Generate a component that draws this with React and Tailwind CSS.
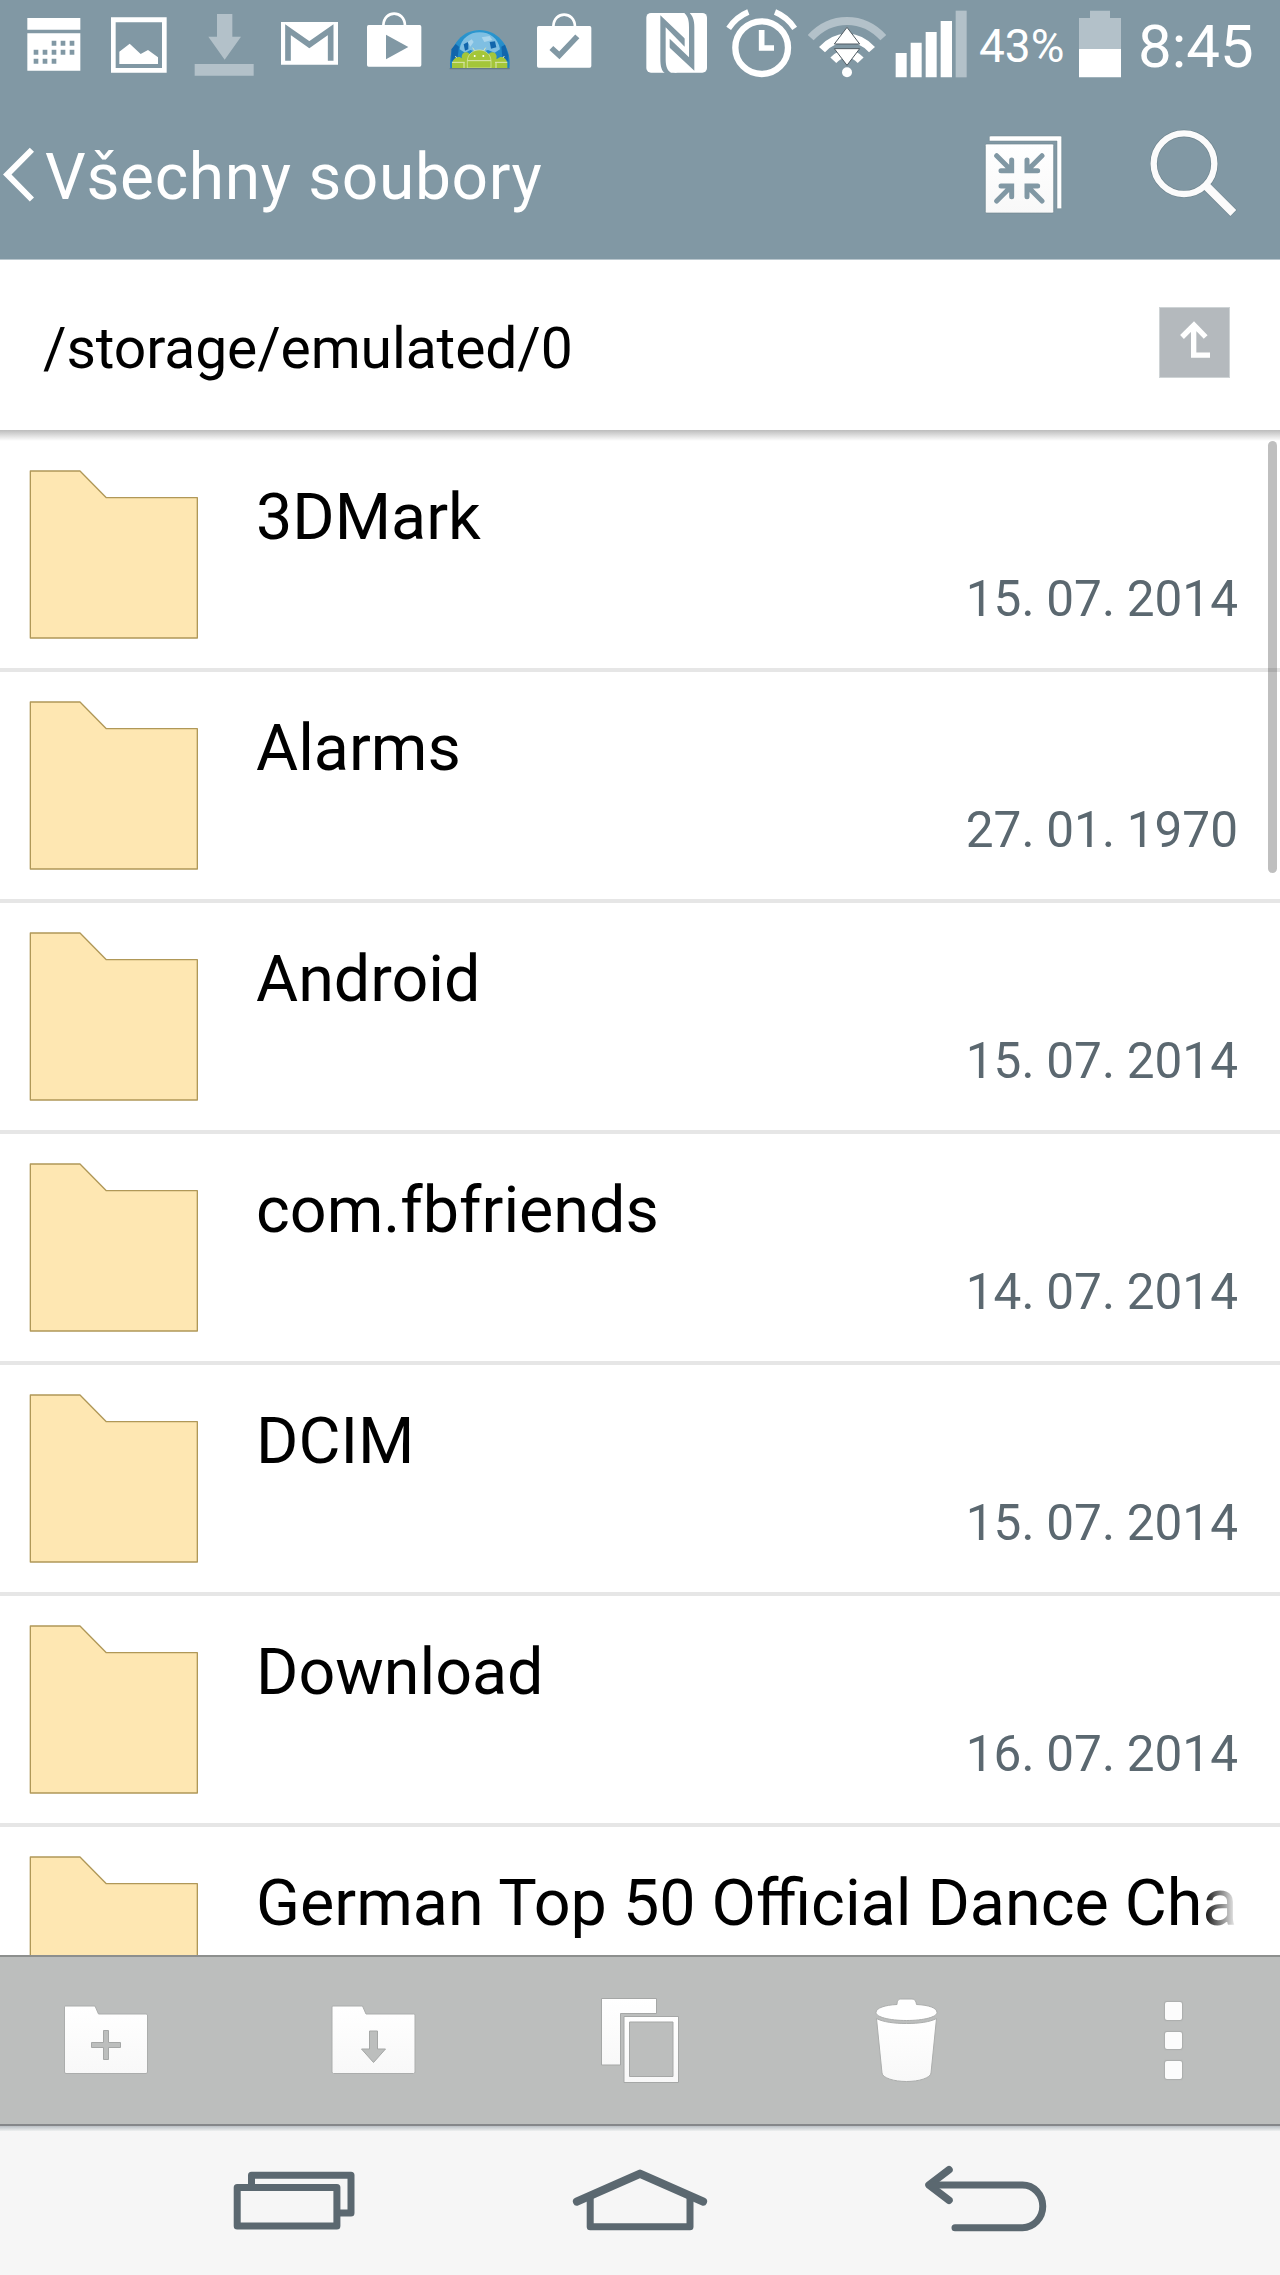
import React from 'react';

const folders = [
  { name: '3DMark', date: '15. 07. 2014' },
  { name: 'Alarms', date: '27. 01. 1970' },
  { name: 'Android', date: '15. 07. 2014' },
  { name: 'com.fbfriends', date: '14. 07. 2014' },
  { name: 'DCIM', date: '15. 07. 2014' },
  { name: 'Download', date: '16. 07. 2014' },
  { name: 'German Top 50 Official Dance Cha', date: '' },
];

// Status bar icons share one 270 unit tall canvas, shown 90px high
const CalendarIcon = () => (
  <svg className="ml-[27px] h-[90px] w-[54px] shrink-0" viewBox="81 0 162 270" fill="#fff">
    <path d="M82 54H241V89H82Z" />
    <path fillRule="evenodd" d="M82 100H241V212H82ZM155 122V137H169V122ZM182 122V137H196V122ZM209 122V137H223V122ZM101 149V164H115V149ZM128 149V164H142V149ZM155 149V164H169V149ZM182 149V164H196V149ZM209 149V164H223V149ZM101 176V191H115V176ZM128 176V191H142V176ZM155 176V191H169V176Z" />
  </svg>
);

const PictureIcon = () => (
  <svg className="ml-[30px] h-[90px] w-[56px] shrink-0" viewBox="333 0 168 270" fill="#fff">
    <path fillRule="evenodd" d="M333 52H500V218H333ZM347 67V204H486V67Z" />
    <path d="M358 155L389 131L422 162L444 150L474 172V192H358Z" />
  </svg>
);

const DownloadIcon = () => (
  <svg className="ml-[27px] h-[90px] w-[60px] shrink-0" viewBox="582 0 180 270" fill="#b3c1c9">
    <path d="M651 42H697V110H723L674 179L625 110H651ZM584 192H761V227H584Z" />
  </svg>
);

const GmailIcon = () => (
  <svg className="ml-[27px] h-[90px] w-[57px] shrink-0" viewBox="843 0 171 270">
    <path d="M843 66H1014V194H843Z" fill="#fff" />
    <path d="M864 182V89L928 134L992 89V182" fill="none" stroke="#8198a4" strokeWidth="17" />
  </svg>
);

const BagIcon = ({ className, children }) => (
  <svg className={className} viewBox="141 0 165 270">
    <path d="M190 76C192 29 253 29 255 76" fill="none" stroke="#fff" strokeWidth="8" />
    <rect x="141" y="75" width="163" height="125" rx="5" fill="#fff" />
    {children}
  </svg>
);

const GlobeIcon = () => (
  <svg className="ml-[26px] h-[90px] w-[64px] shrink-0" viewBox="385 0 192 270">
    <defs>
      <linearGradient id="globe" x1="0" y1="0" x2="0" y2="1">
        <stop offset="0" stopColor="#2b97cf" />
        <stop offset="1" stopColor="#1c7ec2" />
      </linearGradient>
    </defs>
    <path d="M392 206C384 140 425 90 480 90S577 140 569 206Z" fill="url(#globe)" />
    <path d="M420 148C424 115 450 97 480 97S536 115 541 148L525 158L505 150L480 158L452 150L436 158Z" fill="#7fbfe2" />
    <path d="M395 148L408 132L418 140L414 170L395 185ZM545 140L556 134L566 165V185L548 172ZM432 133L446 125V148L436 152ZM510 126L526 124L530 142L514 146Z" fill="#1166ac" />
    <path d="M444 126L456 118L462 126L452 140ZM486 112L510 108L518 120L494 126Z" fill="#a9d5ec" />
    <g fill="#a4c639">
      <circle cx="439" cy="170" r="13" />
      <circle cx="518" cy="170" r="13" />
      <path d="M427 176H532V204H427Z" />
      <path d="M397 204V190C404 165 430 165 435 190H526C532 165 558 165 563 190V204Z" />
      <path d="M443 204V182C446 139 511 139 514 182V204Z" stroke="#dce8b4" strokeWidth="2" />
    </g>
    <path d="M397 187H435M443 182H514M526 187H563M465 152L459 143M492 152L498 143M411 174L407 168M550 174L554 168M433 187V204M529 187V204" fill="none" stroke="#dce8b4" strokeWidth="3" />
    <circle cx="465" cy="168" r="3" fill="#fff" />
    <circle cx="491" cy="168" r="3" fill="#fff" />
    <path d="M390 206H570" stroke="#667a85" strokeWidth="4" />
  </svg>
);

const NfcIcon = () => (
  <svg className="ml-[54px] h-[90px] w-[62px] shrink-0" viewBox="17 0 186 270">
    <rect x="18" y="39" width="182" height="179" rx="14" fill="#fff" />
    <path d="M112 36C134 42 138 56 138 80V120L60 46V176C60 200 64 212 74 220H108C86 216 80 200 80 176V136L162 212V82C162 58 156 44 144 36Z" fill="#8198a4" />
    <path d="M72 74L140 142V160L80 104V180C80 200 86 214 106 218H76C72 206 72 190 72 176Z" fill="#8198a4" />
    <path d="M76 82L133 140V82C133 54 124 44 104 39H132C144 50 146 64 146 82V172L88 116V176C88 200 96 212 112 218H92C78 210 76 192 76 176Z" fill="#fff" />
  </svg>
);

const AlarmIcon = () => (
  <svg className="ml-[17px] h-[90px] w-[74px] shrink-0" viewBox="255 0 222 270" fill="none" stroke="#fff">
    <circle cx="365" cy="143" r="79" strokeWidth="19" />
    <path d="M365 90V144H402" strokeWidth="17" />
    <path d="M266 85C282 61 300 46 325 36M464 85C448 61 430 46 405 36" strokeWidth="17" />
  </svg>
);

const WifiIcon = () => (
  <svg className="ml-[9px] h-[90px] w-[78px] shrink-0" viewBox="507 0 234 270" fill="none">
    <path d="M515 113C576 46 672 46 733 113" stroke="#b3c1c9" strokeWidth="24" />
    <path d="M549 149C592 101 656 101 699 149" stroke="#fff" strokeWidth="24" />
    <path d="M583 181C607 155 641 155 665 181" stroke="#fff" strokeWidth="24" />
    <circle cx="624" cy="217" r="15" fill="#fff" />
    <path d="M586 132L624 82L662 132ZM586 146L624 196L662 146Z" fill="#fff" stroke="#505b62" strokeWidth="3" />
  </svg>
);

const SignalIcon = () => (
  <svg className="ml-[9px] h-[90px] w-[72px] shrink-0" viewBox="763 0 216 270">
    <path d="M765 159H798V232H765ZM810 128H843V232H810ZM855 96H888V232H855ZM900 63H934V232H900Z" fill="#fff" />
    <path d="M945 32H978V232H945Z" fill="#b3c1c9" />
  </svg>
);

const BatteryIcon = () => (
  <svg className="ml-auto h-[90px] w-[42px] shrink-0" viewBox="357 0 126 270">
    <path d="M390 32H450V54H483V147H357V54H390Z" fill="#b3c1c9" />
    <path d="M357 147H483V232H357Z" fill="#fff" />
  </svg>
);

const StatusBar = () => (
  <div className="flex h-[90px] items-start text-white">
    <CalendarIcon />
    <PictureIcon />
    <DownloadIcon />
    <GmailIcon />
    <BagIcon className="ml-[29px] h-[90px] w-[55px] shrink-0">
      <path d="M198 104L265 141L198 178Z" fill="#8198a4" />
    </BagIcon>
    <GlobeIcon />
    <BagIcon className="ml-[25px] mt-px h-[90px] w-[55px] shrink-0">
      <path d="M184 141L208 163L262 106" fill="none" stroke="#8198a4" strokeWidth="17" />
    </BagIcon>
    <NfcIcon />
    <AlarmIcon />
    <WifiIcon />
    <SignalIcon />
    <span className="ml-[12px] mt-[19px] w-[90px] text-[46px] leading-[54px] whitespace-nowrap">43%</span>
    <BatteryIcon />
    <span className="ml-[17px] mt-[12px] w-[142px] text-[60px] leading-[70px] whitespace-nowrap">8:45</span>
  </div>
);

const CollapseIcon = () => (
  <svg className="h-[80px] w-[80px]" viewBox="134 71 240 240">
    <defs>
      <linearGradient id="paper" x1="0" y1="0" x2="0" y2="1">
        <stop offset="0" stopColor="#fff" />
        <stop offset="1" stopColor="#f8f8f8" />
      </linearGradient>
    </defs>
    <path d="M150 92V81Q150 77 154 77H363Q367 77 367 81V292Q367 295 363 295H353V92Z" fill="#fff" stroke="#70868f" strokeWidth="1.5" />
    <rect x="138" y="101" width="205" height="207" rx="4" fill="url(#paper)" stroke="#70868f" strokeWidth="2" />
    <g fill="none" stroke="#8198a4" strokeWidth="15" strokeLinecap="round">
      <path d="M172 136L214 178M217 149V181H185M308 136L266 178M263 149V181H295M172 272L214 230M217 259V227H185M308 272L266 230M263 259V227H295" />
    </g>
  </svg>
);

const SearchIcon = () => (
  <svg className="h-[90px] w-[88px]" viewBox="628 55 264 270" fill="none">
    <circle cx="730" cy="159" r="91" stroke="#6f858f" strokeWidth="23" />
    <path d="M798 228L879 308" stroke="#6f858f" strokeWidth="29" />
    <circle cx="730" cy="159" r="91" stroke="#fbfbfb" strokeWidth="19" />
    <path d="M797 226L878 307" stroke="#fbfbfb" strokeWidth="25" />
  </svg>
);

const Header = () => (
  <div className="flex h-[169px] items-start">
    <svg className="ml-[3px] mt-[57px] h-[56px] w-[31px]" viewBox="3 147 31 56" fill="#fff">
      <path d="M3 174.500L29.800 147.700L34 151.700L11.500 174.500L34 197.500L29.800 201.500Z" />
    </svg>
    <h1 className="ml-[11px] mt-[50px] text-[64px] leading-[75px] tracking-[0.65px] text-white whitespace-nowrap">Všechny soubory</h1>
    <div className="ml-auto mt-[43.500px] mr-[42px] flex items-start gap-[86px]">
      <CollapseIcon />
      <div className="-mt-[5px]">
        <SearchIcon />
      </div>
    </div>
  </div>
);

const PathBar = () => (
  <div className="flex h-[170px] items-start justify-between bg-white">
    <span className="ml-[43px] mt-[55px] text-[57px] leading-[68px] tracking-[-0.1px] text-black">/storage/emulated/0</span>
    <button className="mt-[47px] mr-[50px] h-[71px] w-[71px] border border-[#ced3d5] bg-[#b4b9bd]">
      <svg className="h-[69px] w-[69px]" viewBox="660 595 207 207" fill="none" stroke="#fff" strokeWidth="16">
        <path d="M726 682L762 646L797 682M761 648V736.500H810" />
      </svg>
    </button>
  </div>
);

const FolderIcon = () => (
  <svg className="mt-[29px] ml-[29px] h-[170px] w-[170px] shrink-0" viewBox="87 90 510 510">
    <path d="M91 93H240L319 173H592V594H91Z" fill="#fee7b2" stroke="#b09858" strokeWidth="4" strokeLinejoin="round" />
  </svg>
);

const FolderRow = ({ name, date }) => (
  <div className="flex h-[231px] shrink-0 border-b-4 border-[#e6e6e6]">
    <FolderIcon />
    <div className="ml-[57px] mr-[42px] flex min-w-0 flex-1 flex-col">
      <div className="mt-[39px] text-[64.600px] leading-[75px] whitespace-nowrap text-black [mask-image:linear-gradient(to_right,#000_calc(100%-36px),transparent)]">
        {name}
      </div>
      <div className="mt-[14px] text-right text-[49.500px] leading-[60px] whitespace-nowrap text-[#5b6870] [word-spacing:-0.5px]">{date}</div>
    </div>
  </div>
);

const FileList = () => (
  <div className="relative flex h-[1525px] flex-col overflow-hidden bg-white">
    <div className="h-[11px] shrink-0 bg-linear-to-b from-[#bcbcbc] via-[#dedede] to-white" />
    {folders.map((folder) => (
      <FolderRow key={folder.name} name={folder.name} date={folder.date} />
    ))}
    {/* Scrollbar */}
    <div className="absolute top-[11px] right-[3px] h-[432px] w-[9px] rounded-full bg-black/25" />
  </div>
);

const Toolbar = () => (
  <div className="flex h-[171px] items-start border-t-2 border-b-2 border-t-[#8d8f8e] border-b-[#85878a] bg-[#bcbebd]">
    <svg className="ml-[60.500px] mt-[43px] h-[90px] w-[90px]" viewBox="61 2000 90 90">
      <path d="M64.500 2007Q64.500 2006 65.500 2006H95L98.500 2014H146Q147.500 2014 147.500 2015V2072Q147.500 2073.500 146 2073.500H66Q64.500 2073.500 64.500 2072Z" fill="url(#paper)" stroke="#abadac" />
      <path d="M103.500 2030.500H108.500V2042.500H120.500V2047.500H108.500V2059.500H103.500V2047.500H91.500V2042.500H103.500Z" fill="#bcbebd" stroke="#a5a7a6" strokeLinejoin="round" />
    </svg>
    <svg className="ml-[177px] mt-[43px] h-[90px] w-[90px]" viewBox="328 2000 90 90">
      <path d="M332 2007Q332 2006 333 2006H362.500L366 2014H413.500Q415 2014 415 2015V2072Q415 2073.500 413.500 2073.500H333.500Q332 2073.500 332 2072Z" fill="url(#paper)" stroke="#abadac" />
      <path d="M369.500 2031H377.500V2049H385.500L373.500 2062.500L361.500 2049H369.500Z" fill="#bcbebd" stroke="#a5a7a6" strokeLinejoin="round" />
    </svg>
    <svg className="ml-[180px] mt-[38px] h-[90px] w-[84px]" viewBox="598 1995 84 90">
      <path d="M601.500 1998.500H656.500V2013.500H620.500V2065H601.500Z" fill="url(#paper)" stroke="#a5a7a6" strokeLinejoin="round" />
      <path fillRule="evenodd" d="M624 2016.500H678.500V2082.500H624ZM629.500 2022V2076.500H673V2022Z" fill="url(#paper)" stroke="#a5a7a6" strokeLinejoin="round" />
    </svg>
    <svg className="ml-[191px] mt-[38px] h-[90px] w-[68px]" viewBox="873 1995 68 90" stroke="#abadac">
      <path d="M876 2012.500C876 2008 885 2005 897 2004.500C897 2000 899 1999 901 1999H912C915 1999 916 2001 916.500 2004.500C929 2005 937 2008 937 2012.500C937 2017 924 2020.500 906.500 2020.500S876 2017 876 2012.500Z" fill="#fff" />
      <path d="M876.500 2018.500C883 2022 894 2023.500 906.500 2023.500S930 2022 936.500 2018.500L931 2073C930.500 2078 919 2081.500 906.500 2081.500S882.500 2078 882 2073Z" fill="url(#paper)" />
    </svg>
    <div className="ml-[224px] mt-[45px] flex flex-col gap-[12px]">
      {[0, 1, 2].map((dot) => (
        <span key={dot} className="h-[17.500px] w-[17px] rounded-xs bg-[#fcfcfc] shadow-[0_0_1px_1px_#abadac]" />
      ))}
    </div>
  </div>
);

const NavBar = () => (
  <div className="flex h-[149px] flex-col bg-[#f6f6f6]">
    <div className="h-[5px] bg-linear-to-b from-[#b9bfc4] to-[#eef0f0]" />
    <div className="flex flex-1 items-start">
      <svg className="ml-[230px] mt-[34px] h-[70px] w-[130px]" viewBox="230 2165 130 70" fill="none" stroke="#5b6870" strokeWidth="7" strokeLinejoin="round">
        <path d="M251.500 2184V2175.200H351V2213H340" />
        <rect x="237.200" y="2187.500" width="99.700" height="38.500" />
      </svg>
      <svg className="ml-[210px] mt-[34px] h-[70px] w-[140px]" viewBox="570 2165 140 70" fill="none" stroke="#5b6870" strokeWidth="7" strokeLinejoin="round">
        <path d="M590.200 2197V2226.700H690V2197" />
        <path d="M577 2201.500L640 2173.700L703 2201.500" strokeWidth="8.200" strokeLinecap="round" />
      </svg>
      <svg className="ml-[210px] mt-[34px] h-[70px] w-[130px]" viewBox="920 2165 130 70" fill="none" stroke="#5b6870" strokeWidth="7" strokeLinecap="round" strokeLinejoin="round">
        <path d="M949 2169.800L929 2185L949 2200.300" strokeWidth="7.500" />
        <path d="M931 2185H1022.500A20.200 21.300 0 0 1 1022.500 2227.700H955" />
      </svg>
    </div>
  </div>
);

const App = () => {
  return (
    <div className="h-[2275px] w-[1280px] overflow-hidden bg-white font-['Roboto',sans-serif]">
      <div className="h-[260px] border-b border-[#b9c6cd] bg-[#8198a4]">
        <StatusBar />
        <Header />
      </div>
      <PathBar />
      <FileList />
      <Toolbar />
      <NavBar />
    </div>
  );
};

export default App;
